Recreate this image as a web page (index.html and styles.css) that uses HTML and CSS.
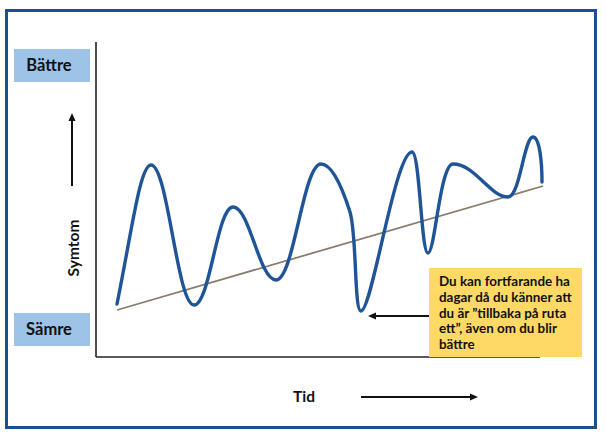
FILE: index.html
```html
<!DOCTYPE html>
<html lang="sv">
<head>
<meta charset="utf-8">
<title>Symtom över tid</title>
<link rel="stylesheet" href="styles.css">
</head>
<body>
<div class="page">
  <div class="frame"></div>
  <svg class="chart" viewBox="0 0 606 448" width="606" height="448" xmlns="http://www.w3.org/2000/svg">
    <line class="axis" x1="96" y1="42" x2="96" y2="357"/>
    <line class="axis" x1="96" y1="357" x2="540" y2="357"/>
    <line class="trend" x1="117" y1="310" x2="543" y2="186"/>
    <path class="curve" d="M117,304 C132,230 140,165 151,165 C168,165 177,305 194,305 C210,305 217,207 233,207 C250,207 259,280 276,280 C294,280 303,164 321,164 C333,164 343,190 350,212 C357,235 354,311 361,311 C372,311 395,152 412,152 C420,152 421,253 428,253 C435,253 440,164 453,164 C475,164 490,197 508,197 C520,197 524,137 533,137 C540,137 542,165 542,182"/>
    <line class="arrow" x1="72" y1="186" x2="72" y2="119"/>
    <polygon class="head" points="72,113 68.5,121 75.5,121"/>
    <line class="arrow" x1="361" y1="397" x2="472" y2="397"/>
    <polygon class="head" points="478,397 470,393.5 470,400.5"/>
    <line class="arrow" x1="430" y1="316" x2="374" y2="316"/>
    <polygon class="head" points="368,316 376,312.5 376,319.5"/>
  </svg>
  <div class="tag tag-better">Bättre</div>
  <div class="tag tag-worse">Sämre</div>
  <div class="ylabel">Symtom</div>
  <div class="xlabel">Tid</div>
  <div class="note">Du kan fortfarande ha dagar då du känner att du är ”tillbaka på ruta ett”, även om du blir bättre</div>
</div>
</body>
</html>
```

FILE: styles.css
```css
html, body {
  margin: 0;
  padding: 0;
  background: #ffffff;
}

.page {
  position: relative;
  width: 606px;
  height: 448px;
  overflow: hidden;
  font-family: Lato, "Open Sans", "Liberation Sans", sans-serif;
  font-weight: 700;
  color: #111111;
}

.frame {
  position: absolute;
  left: 5px;
  top: 9px;
  width: 586px;
  height: 414px;
  border: 3px solid #1f4e8c;
}

.chart {
  position: absolute;
  left: 0;
  top: 0;
}

.axis {
  stroke: #222222;
  stroke-width: 1.6;
}

.trend {
  stroke: #8a7d6c;
  stroke-width: 1.8;
}

.curve {
  fill: none;
  stroke: #1f5597;
  stroke-width: 3.4;
  stroke-linecap: round;
  stroke-linejoin: round;
}

.arrow {
  stroke: #111111;
  stroke-width: 2;
}

.head {
  fill: #111111;
}

.tag {
  position: absolute;
  left: 14px;
  width: 76px;
  height: 33px;
  box-sizing: border-box;
  padding-right: 6px;
  background: #9dc3e6;
  font-size: 16.5px;
  line-height: 33px;
  text-align: center;
}

.tag-better {
  top: 49px;
}

.tag-worse {
  top: 313px;
}

.ylabel {
  position: absolute;
  left: 41px;
  top: 238px;
  width: 64px;
  height: 20px;
  line-height: 20px;
  font-size: 15.5px;
  text-align: center;
  transform: rotate(-90deg);
}

.xlabel {
  position: absolute;
  left: 284px;
  top: 386px;
  width: 40px;
  line-height: 20px;
  font-size: 15.5px;
  text-align: center;
}

.note {
  position: absolute;
  left: 429px;
  top: 268px;
  width: 153px;
  height: 89px;
  box-sizing: border-box;
  padding: 6px 6px 0 10px;
  background: #ffd966;
  font-size: 13.4px;
  line-height: 15.8px;
}
```
